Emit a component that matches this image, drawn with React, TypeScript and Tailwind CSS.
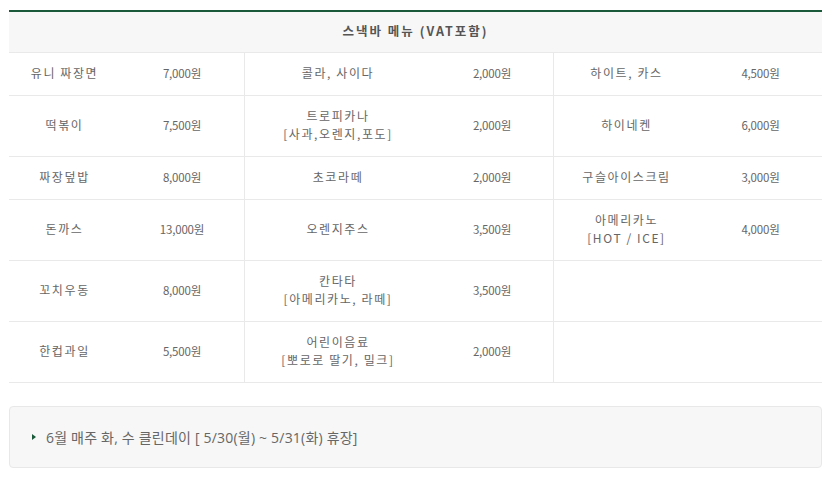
const rows: [string, string, string, string, string, string][] = [
  ["유니 짜장면", "7,000원", "콜라, 사이다", "2,000원", "하이트, 카스", "4,500원"],
  ["떡볶이", "7,500원", "트로피카나\n[사과,오렌지,포도]", "2,000원", "하이네켄", "6,000원"],
  ["짜장덮밥", "8,000원", "초코라떼", "2,000원", "구슬아이스크림", "3,000원"],
  ["돈까스", "13,000원", "오렌지주스", "3,500원", "아메리카노\n[HOT / ICE]", "4,000원"],
  ["꼬치우동", "8,000원", "칸타타\n[아메리카노, 라떼]", "3,500원", "", ""],
  ["한컵과일", "5,500원", "어린이음료\n[뽀로로 딸기, 밀크]", "2,000원", "", ""],
];

function Cell({ text, divider, price }: { text: string; divider?: boolean; price?: boolean }) {
  return (
    <div
      className={
        "flex flex-col items-center justify-center border-b border-[#e9e9e9] pt-[11px] pb-[13px] text-center leading-[18px]" +
        (price ? " text-[11.5px] tracking-[-0.2px]" : " tracking-[1.6px]") +
        (divider ? " border-l" : "")
      }
    >
      {text.split("\n").map((line, i) => (
        <span key={i}>{line}</span>
      ))}
    </div>
  );
}

export default function App() {
  return (
    <div className="w-[831px] h-[477px] bg-white px-[9px] pt-[10px] font-['Noto_Sans_CJK_KR',sans-serif] text-[12px] text-[#666]">
      <div className="border-t-2 border-[#1a5a3a]">
        <div className="border-b border-[#e9e9e9] bg-[#f7f7f7] pt-[10px] pb-[13px] text-center text-[12.5px] font-bold leading-[17px] tracking-[2px] text-[#555]">
          스낵바 메뉴 (VAT포함)
        </div>
        <div className="grid grid-cols-[111px_124px_187px_122px_146px_123px]">
          {rows.map((r, i) => (
            <div key={i} className="contents">
              <Cell text={r[0]} />
              <Cell text={r[1]} price />
              <Cell text={r[2]} divider />
              <Cell text={r[3]} price />
              <Cell text={r[4]} divider />
              <Cell text={r[5]} price />
            </div>
          ))}
        </div>
      </div>

      <div className="mt-[23px] flex h-[62px] items-center rounded-[4px] border border-[#e8e8e8] bg-[#f7f7f7] pl-[22px] font-['Open_Sans','Noto_Sans_CJK_KR',sans-serif] text-[14px] tracking-[0.2px] text-[#666]">
        <span className="mr-[10px] h-0 w-0 border-y-[3px] border-l-[4px] border-y-transparent border-l-[#1a5a3a]" />
        6월 매주 화, 수 클린데이 [ 5/30(월) ~ 5/31(화) 휴장]
      </div>
    </div>
  );
}
